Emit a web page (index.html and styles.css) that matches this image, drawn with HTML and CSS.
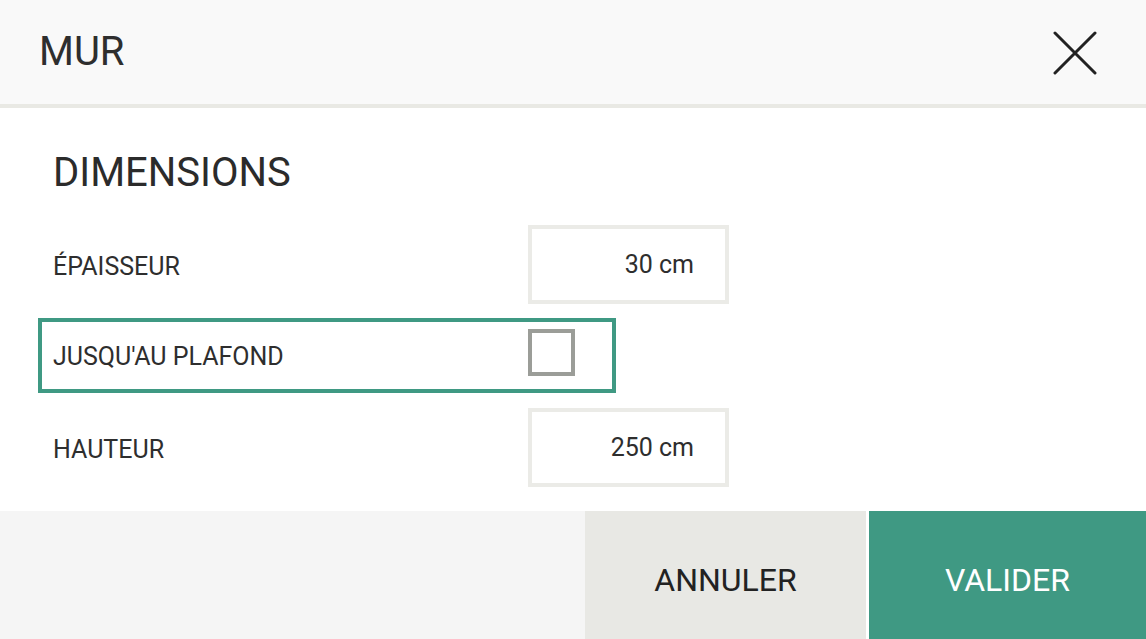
FILE: index.html
```html
<!DOCTYPE html>
<html lang="fr">
<head>
<meta charset="utf-8">
<title>Mur</title>
<link rel="stylesheet" href="styles.css">
</head>
<body>
<div class="dialog">
  <header class="header">
    <h1 class="title">MUR</h1>
    <button class="close" aria-label="Fermer">
      <svg width="44" height="44" viewBox="0 0 44 44"><path d="M2 2 L42 42 M42 2 L2 42" stroke="#222" stroke-width="3" stroke-linecap="round" fill="none"/></svg>
    </button>
  </header>
  <main class="content">
    <h2 class="section">DIMENSIONS</h2>
    <div class="row">
      <span class="label">ÉPAISSEUR</span>
      <div class="field">30 cm</div>
    </div>
    <div class="row row-focus">
      <span class="label">JUSQU'AU PLAFOND</span>
      <span class="checkbox"></span>
    </div>
    <div class="row">
      <span class="label">HAUTEUR</span>
      <div class="field">250 cm</div>
    </div>
  </main>
  <footer class="footer">
    <div class="spacer"></div>
    <button class="btn btn-cancel">ANNULER</button>
    <button class="btn btn-ok">VALIDER</button>
  </footer>
</div>
</body>
</html>
```
FILE: styles.css
```css
* { box-sizing: border-box; }
html, body { margin: 0; padding: 0; }
body {
  font-family: Roboto, "Liberation Sans", Arial, sans-serif;
  color: #2b2b2b;
  background: #fff;
  width: 1146px;
  height: 639px;
  overflow: hidden;
}
.dialog { display: flex; flex-direction: column; height: 639px; }
.header {
  height: 108px;
  background: #f9f9f9;
  border-bottom: 4px solid #e9e9e4;
  display: flex;
  align-items: center;
  justify-content: space-between;
  padding: 0 49px 0 39px;
}
.title {
  margin: 0;
  font-size: 40px;
  font-weight: 400;
  color: #2e2e2e;
  line-height: 1;
}
.close {
  border: 0;
  background: transparent;
  padding: 0;
  width: 44px;
  height: 44px;
  margin-top: 2px;
  display: block;
}
.content {
  padding: 41px 0 24px 38px;
  display: flex;
  flex-direction: column;
  align-items: flex-start;
}
.section {
  margin: 0 0 29px 15px;
  font-size: 40px;
  font-weight: 400;
  line-height: 47px;
  color: #2b2b2b;
}
.row {
  display: flex;
  align-items: center;
  padding: 0 0 0 15px;
  margin-bottom: 14px;
}
.row:last-child { margin-bottom: 0; }
.label {
  width: 475px;
  font-size: 25px;
  color: #2e2e2e;
  padding-top: 3px;
}
.field {
  width: 201px;
  height: 79px;
  border: 4px solid #ebebe7;
  display: flex;
  align-items: center;
  justify-content: flex-end;
  padding: 0 31px 0 0;
  font-size: 25px;
  color: #2e2e2e;
}
.row-focus {
  border: 4px solid #3f9983;
  padding: 7px 37px 13px 11px;
  margin-bottom: 15px;
}
.row-focus .label { padding-top: 8px; }
.checkbox {
  width: 47px;
  height: 47px;
  border: 4px solid #9b9d98;
  display: block;
}
.footer {
  margin-top: auto;
  height: 128px;
  display: flex;
}
.spacer { flex: 1; background: #f5f5f5; }
.btn {
  border: 0;
  font-family: Roboto, "Liberation Sans", Arial, sans-serif;
  font-size: 32px;
  padding: 10px 0 0 0;
  height: 128px;
}
.btn-cancel {
  width: 281px;
  background: #e8e8e4;
  color: #222;
  margin-right: 3px;
}
.btn-ok {
  width: 277px;
  background: #3f9983;
  color: #fff;
}
```
